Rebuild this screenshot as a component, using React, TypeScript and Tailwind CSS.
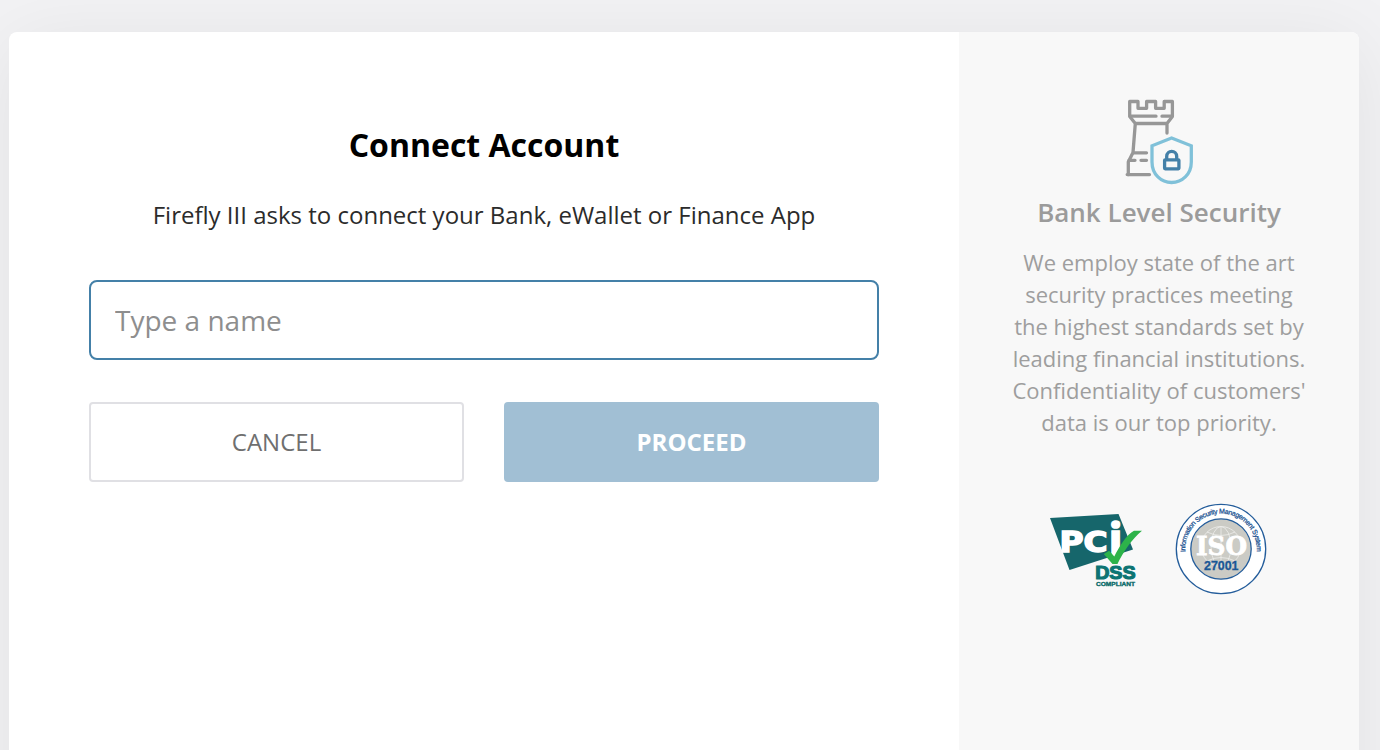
import React from "react";

function TowerIcon() {
  return (
    <svg width="70" height="86" viewBox="1124 99 70 86" fill="none" strokeWidth="3.3" strokeLinecap="round" strokeLinejoin="round">
      <g stroke="#979797">
        <path d="M1167 133V123.5L1172.4 116.5V101.5H1164.2V108.3H1155.6V101.5H1146.6V108.3H1138V101.5H1129.7V116.5L1135.3 123.5L1133 152.5L1128.3 162V174.5" />
        <path d="M1131 116.2H1156M1162 116.2H1171M1136 123.5H1166M1134 152.8H1146.5" />
        <path d="M1129 160.3H1135M1141 160.3H1146.5M1127.2 174.6H1149.5" />
      </g>
      <path stroke="#80c1d9" strokeLinejoin="miter" d="M1171.6 138L1191.3 145.8V162C1191.3 174.5 1182 182.5 1171.6 182.5C1161.2 182.5 1152 174.5 1152 162V145.8Z" />
      <g stroke="#4480a8">
        <rect x="1164.6" y="159.8" width="14.3" height="9" rx="0.5" />
        <path d="M1166.7 159V156.5C1166.7 149.7 1176.7 149.7 1176.7 156.5V159" />
      </g>
    </svg>
  );
}

function PciLogo() {
  return (
    <svg width="94" height="76" viewBox="1049 511 94 76" fontFamily="'Liberation Sans', Arial, sans-serif" fontWeight="bold">
      <path fill="#16666b" d="M1050 518L1118.5 514L1133 549.5L1069.5 570Z" />
      <g fill="#fff" stroke="#fff">
        <text x="1059.6" y="552.3" fontFamily="'DejaVu Sans', sans-serif" fontSize="28.5" textLength="48" lengthAdjust="spacingAndGlyphs" strokeWidth="1.5">PC</text>
        <text x="1108.2" y="558" fontFamily="'Open Sans', sans-serif" fontSize="48" strokeWidth="1.5">i</text>
      </g>
      <path fill="#2db34a" d="M1103.8 554L1109.2 550.8L1114.3 556.5C1119 547 1127 534 1134 530.7H1142C1132 539 1123 552 1117.5 564H1112.5Z" />
      <text x="1095.2" y="578.7" fontSize="17.6" textLength="40.4" lengthAdjust="spacingAndGlyphs" fill="#0c7473" stroke="#0c7473" strokeWidth="1.1">DSS</text>
      <text x="1096" y="585.8" fontSize="5.7" textLength="39" lengthAdjust="spacingAndGlyphs" fill="#0c6c6b" stroke="#0c6c6b" strokeWidth="0.35">COMPLIANT</text>
    </svg>
  );
}

function IsoLogo() {
  return (
    <svg width="92" height="92" viewBox="1175 503 92 92" fontFamily="'Liberation Sans', Arial, sans-serif">
      <defs>
        <path id="isoArc" d="M1185.4 552A35.7 35.7 0 1 1 1256.6 552" />
      </defs>
      <circle cx="1221" cy="549" r="44.7" fill="#fff" stroke="#245d9b" strokeWidth="1.3" />
      <circle cx="1221" cy="549" r="30.2" fill="#cbcbc5" stroke="#245d9b" strokeWidth="1.3" />
      <g fill="none" stroke="#eeeeeb" strokeWidth="0.8">
        <circle cx="1221" cy="546.5" r="20" />
        <ellipse cx="1221" cy="546.5" rx="10" ry="20" />
        <path d="M1221 526.5V566M1207 532Q1221 539 1235 532M1207 561Q1221 554 1235 561" />
      </g>
      <text x="1196" y="555.3" fontFamily="'DejaVu Serif', serif" fontWeight="bold" fontSize="25.5" textLength="51" lengthAdjust="spacingAndGlyphs" fill="#fff" stroke="#fff" strokeWidth="0.8">ISO</text>
      <text x="1204" y="570.3" fontWeight="bold" fontSize="12.3" textLength="34.5" lengthAdjust="spacingAndGlyphs" fill="#1a5796" stroke="#1a5796" strokeWidth="0.3">27001</text>
      <text fontSize="7" fill="#174f8f" stroke="#174f8f" strokeWidth="0.25" textLength="117">
        <textPath href="#isoArc" textLength="117">Information Security Management System</textPath>
      </text>
    </svg>
  );
}

const securityLines = [
  "We employ state of the art",
  "security practices meeting",
  "the highest standards set by",
  "leading financial institutions.",
  "Confidentiality of customers'",
  "data is our top priority.",
];

export default function App() {
  return (
    <div className="h-[750px] overflow-hidden bg-[#f2f2f4] pt-8 pl-[9px] font-['Open_Sans',sans-serif]">
      <div className="flex h-[900px] w-[1350px] overflow-hidden rounded-lg bg-white shadow-[0_10px_80px_rgba(0,0,0,0.07)]">
        <main className="flex w-[950px] flex-col px-20 pt-[89px]">
          <h1 className="text-center text-[32px] leading-[48px] font-bold text-black">Connect Account</h1>
          <p className="mt-7 text-center text-2xl leading-[36px] text-[#2b2b2b]">
            Firefly III asks to connect your Bank, eWallet or Finance App
          </p>
          <input
            type="text"
            placeholder="Type a name"
            className="mt-[47px] h-20 w-full rounded-lg border-2 border-[#4480a8] bg-white px-6 text-[28px] outline-none placeholder:text-[#8e8e8e]"
          />
          <div className="mt-[42px] grid grid-cols-2 gap-10">
            <button className="h-20 rounded border-2 border-[#e0e0e4] text-2xl text-[#6f6f6f]">CANCEL</button>
            <button className="h-20 rounded bg-[#a1bfd4] text-2xl font-bold text-white">PROCEED</button>
          </div>
        </main>
        <aside className="flex w-[400px] flex-col items-center bg-[#f8f8f8] pt-[67px]">
          <TowerIcon />
          <h2 className="mt-[9px] text-[26px] leading-9 font-semibold text-[#9b9b9b]">Bank Level Security</h2>
          <p className="mt-4 text-center text-[22px] leading-8 text-[#9e9e9e]">
            {securityLines.map((line) => (
              <span key={line} className="block whitespace-nowrap">{line}</span>
            ))}
          </p>
          <div className="mt-[65px] flex items-center gap-8 pr-0.5">
            <PciLogo />
            <IsoLogo />
          </div>
        </aside>
      </div>
    </div>
  );
}
